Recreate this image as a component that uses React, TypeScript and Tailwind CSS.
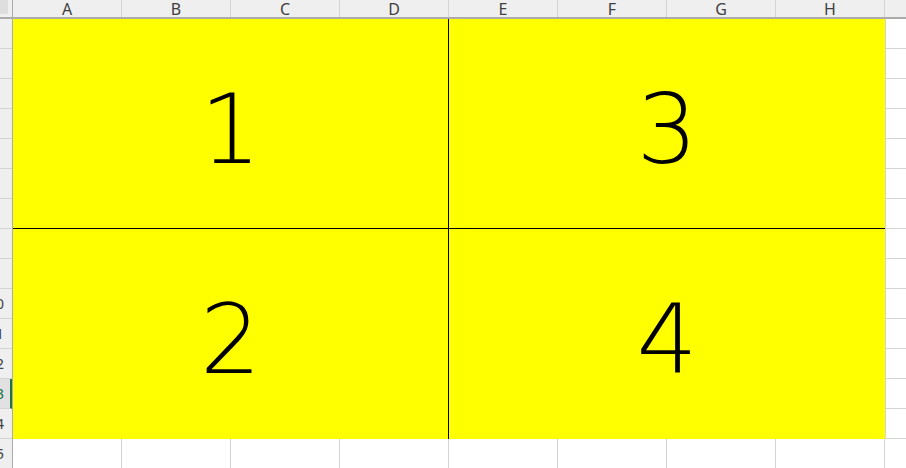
import React from 'react';

const COLS = ['A', 'B', 'C', 'D', 'E', 'F', 'G', 'H'];
const ROWS = Array.from({ length: 15 }, (_, i) => i + 1);
const SELECTED_ROW = 13;

function ColumnHeader() {
  return (
    <div className="flex h-[19px] border-b-2 border-[#ababab] bg-[#efefef]">
      <div className="relative w-[13px] shrink-0 border-r border-[#ababab]">
        <div className="absolute left-0 top-0 h-[14px] w-[8px] bg-[#dedede]" />
      </div>
      {COLS.map((c) => (
        <div
          key={c}
          className="flex w-[109px] shrink-0 items-center justify-center border-r border-[#d4d4d4] text-[16px] leading-none text-[#3f3f3f]"
          style={{ fontFamily: '"Noto Sans", "Liberation Sans", sans-serif' }}
        >
          {c}
        </div>
      ))}
      <div className="flex-1" />
    </div>
  );
}

function RowHeader() {
  return (
    <div className="w-[13px] shrink-0 border-r border-[#ababab] bg-[#efefef]">
      {ROWS.map((r) => {
        const sel = r === SELECTED_ROW;
        return (
          <div
            key={r}
            className={
              sel
                ? 'relative h-[30px] overflow-hidden border-b border-[#d4d4d4] border-r-2 border-r-[#217346] bg-[#e1e1e1] text-[#217346]'
                : 'relative h-[30px] overflow-hidden border-b border-[#d4d4d4] text-[#444]'
            }
          >
            {/* header is wider than shown; only its right edge is visible */}
            <div
              className="absolute left-[-25px] top-0 flex h-full w-[41px] items-center justify-center text-[15px] leading-none"
              style={{ fontFamily: '"Noto Sans", "Liberation Sans", sans-serif' }}
            >
              {r}
            </div>
          </div>
        );
      })}
    </div>
  );
}

function Merged({ n, edge }: { n: string; edge: string }) {
  return (
    <div
      className={`flex items-center justify-center bg-[#ffff00] pt-[12px] text-[96px] font-extralight leading-none text-black ${edge}`}
      style={{ fontFamily: '"DejaVu Sans", "Liberation Sans", sans-serif' }}
    >
      {n}
    </div>
  );
}

export default function App() {
  return (
    <div className="h-[468px] w-[906px] overflow-hidden bg-white">
      <ColumnHeader />
      <div className="flex">
        <RowHeader />
        <div className="flex flex-1 flex-col">
          <div className="flex">
            <div className="grid h-[420px] w-[872px] shrink-0 grid-cols-2 grid-rows-2">
              <Merged n="1" edge="border-r border-b border-black" />
              <Merged n="3" edge="border-b border-black" />
              <Merged n="2" edge="border-r border-black" />
              <Merged n="4" edge="" />
            </div>
            <div className="flex-1 border-l border-[#d4d4d4]">
              {ROWS.slice(0, 14).map((r) => (
                <div key={r} className="h-[30px] border-b border-[#d4d4d4]" />
              ))}
            </div>
          </div>
          <div className="flex h-[30px]">
            {COLS.map((c) => (
              <div key={c} className="w-[109px] shrink-0 border-r border-[#d4d4d4]" />
            ))}
            <div className="flex-1" />
          </div>
        </div>
      </div>
    </div>
  );
}
